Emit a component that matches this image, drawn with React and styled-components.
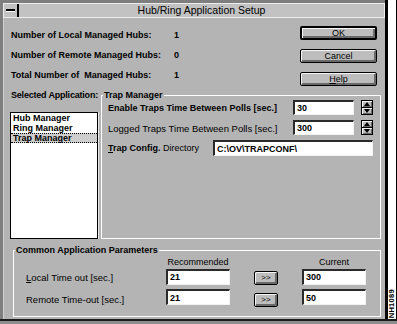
import React from 'react';
import styled, { createGlobalStyle } from 'styled-components';

const Global = createGlobalStyle`
  html, body { margin: 0; padding: 0; background: #8c8c8c; }
  body { font-family: "Liberation Sans", Arial, sans-serif; color: #000; }
  * { box-sizing: border-box; }
`;

const FONT = `"Liberation Sans", Arial, sans-serif`;

const Screen = styled.div`
  width: 397px;
  height: 324px;
  display: grid;
  grid-template-columns: 385px 12px;
  grid-template-rows: 319px 5px;
  background: #8c8c8c;
  overflow: hidden;
`;

const Window = styled.div`
  grid-column: 1;
  grid-row: 1;
  background: #7e7e7e;
  padding: 3px 0 0 3px;
  display: flex;
  flex-direction: column;
`;

const TitleBar = styled.div`
  height: 15px;
  display: flex;
  background: #c2c2c2;
  border: 1px solid #ededed;
`;

const SysMenu = styled.div`
  width: 15px;
  border-right: 2px solid #000;
  display: flex;
  align-items: center;
  justify-content: center;
`;

const SysGlyph = styled.span`
  width: 9px;
  height: 3px;
  border-top: 2px solid #000;
  border-bottom: 1px solid #fff;
`;

const Title = styled.div`
  flex: 1;
  text-align: center;
  font: 10.5px/13px ${FONT};
`;

const Body = styled.div`
  flex: 1;
  background: #b4b4b4;
  border-left: 1px solid #d0d0d0;
  display: flex;
  flex-direction: column;
`;

const TopSection = styled.div`
  height: 71px;
  display: flex;
  justify-content: space-between;
  padding: 0 8px 0 7px;
`;

const InfoGrid = styled.div`
  display: grid;
  grid-template-columns: 163px auto;
  grid-auto-rows: 20px;
  align-items: center;
  padding-top: 7px;
  font: bold 9px ${FONT};
  white-space: nowrap;
`;

const ButtonColumn = styled.div`
  display: flex;
  flex-direction: column;
  gap: 9px;
  padding-top: 8px;
`;

const DlgButton = styled.button`
  width: ${(p) => p.$w || 77}px;
  height: 14px;
  padding: 0;
  background: #bdbdbd;
  border: ${(p) => (p.$default ? 2 : 1)}px solid #000;
  border-radius: 2px;
  box-shadow: inset 1px 1px 0 #f4f4f4, inset -2px -2px 0 #6a6a6a;
  font: ${(p) => p.$size || 9}px/1 ${FONT};
  color: #000;
  display: flex;
  align-items: center;
  justify-content: center;
`;

const Acc = styled.span`
  text-decoration: underline;
`;

const MiddleSection = styled.div`
  display: flex;
  gap: 3px;
  margin-left: 6px;
  height: 150px;
`;

const LeftCol = styled.div`
  width: 88px;
  display: flex;
  flex-direction: column;
`;

const SectionLabel = styled.div`
  height: 12px;
  margin-left: 1px;
  white-space: nowrap;
  letter-spacing: -0.2px;
  font: bold 9px/12px ${FONT};
`;

const ListBox = styled.div`
  margin-top: 11px;
  height: 127px;
  background: #fff;
  border: 1px solid #000;
  box-shadow: 1px 0 0 #e8e8e8;
  display: flex;
  flex-direction: column;
`;

const ListItem = styled.div`
  height: 10px;
  padding-left: 2px;
  font: bold 9px ${FONT};
  line-height: ${(p) => (p.$selected ? 8 : 10)}px;
  white-space: nowrap;
  background: ${(p) => (p.$selected ? '#cdcdcd' : 'transparent')};
  border-top: ${(p) => (p.$selected ? '1px dotted #000' : 'none')};
  border-bottom: ${(p) => (p.$selected ? '1px dotted #000' : 'none')};
`;

const GroupBox = styled.fieldset`
  margin: ${(p) => p.$mt || 0}px 0 0 ${(p) => p.$ml || 0}px;
  padding: 0;
  min-width: 0;
  width: ${(p) => p.$w}px;
  height: ${(p) => p.$h}px;
  border: 1px solid #fff;
`;

const GroupLegend = styled.legend`
  padding: 0 1px;
  margin-left: 1px;
  font: bold 9px/11px ${FONT};
  white-space: nowrap;
`;

const TrapGrid = styled.div`
  display: grid;
  grid-template-columns: 105px 80px 61px 7px 12px;
  grid-template-rows: 16px 16px 16px;
  row-gap: 4px;
  align-items: center;
  padding-left: 6px;
  margin-top: -1px;
`;

const FieldLabel = styled.span`
  grid-column: ${(p) => p.$col || 'auto'};
  font: ${(p) => (p.$bold ? 'bold 9px' : '9.5px')} ${FONT};
  white-space: nowrap;
`;

const Plain = styled.span`
  font-weight: normal;
`;

const Field = styled.input`
  grid-column: ${(p) => p.$col || 'auto'};
  width: 100%;
  height: ${(p) => p.$h || 16}px;
  align-self: ${(p) => p.$align || 'center'};
  padding: 0 0 0 2px;
  margin: 0;
  background: #fff;
  border-top: 2px solid #2a2a2a;
  border-left: 2px solid #2a2a2a;
  border-right: 1px solid #f2f2f2;
  border-bottom: 1px solid #f2f2f2;
  border-radius: 0;
  outline: none;
  font: bold 9px ${FONT};
  color: #000;
`;

const Spin = styled.div`
  grid-column: 5;
  height: 15px;
  align-self: start;
  display: flex;
  flex-direction: column;
  border: 1px solid #000;
  background: #bdbdbd;
`;

const SpinHalf = styled.div`
  flex: 1;
  display: flex;
  align-items: center;
  justify-content: center;
  box-shadow: inset 1px 1px 0 #f4f4f4, inset -1px -1px 0 #6a6a6a;
  & + & {
    border-top: 1px solid #000;
  }
`;

const ParamGrid = styled.div`
  display: grid;
  grid-template-columns: 116px 64px 24px 64px;
  grid-template-rows: 10px 19px 22px;
  column-gap: 24px;
  align-items: end;
  padding: 1px 0 0 12px;
`;

const ColHead = styled.div`
  grid-column: ${(p) => p.$col};
  text-align: center;
  font: 9px/10px ${FONT};
  white-space: nowrap;
`;

const ParamLabel = styled.div`
  grid-column: 1;
  height: 16px;
  font: 9.5px/16px ${FONT};
  white-space: nowrap;
`;

const ArrowBtnCell = styled.div`
  grid-column: 3;
  height: 16px;
  display: flex;
  align-items: start;
  padding-top: 1px;
`;

const Strip = styled.div`
  grid-column: 2;
  grid-row: 1;
  background: #fff;
  border-left: 3px solid #000;
  border-right: 1px solid #000;
  display: flex;
  align-items: flex-end;
  justify-content: center;
  padding-bottom: 1px;
`;

const FigId = styled.span`
  writing-mode: vertical-rl;
  transform: rotate(180deg);
  font: bold 7.5px/8px ${FONT};
  letter-spacing: 0.3px;
`;

const BottomBand = styled.div`
  grid-column: 1 / 3;
  grid-row: 2;
  border-top: 2px solid #1c1c1c;
  background: #8e8e8e;
`;

const Tri = ({ down }) => (
  <svg width="6" height="4" viewBox="0 0 6 4">
    <path d={down ? 'M0 0H6L3 4Z' : 'M0 4H6L3 0Z'} fill="#000" />
  </svg>
);

const SpinButtons = () => (
  <Spin>
    <SpinHalf>
      <Tri />
    </SpinHalf>
    <SpinHalf>
      <Tri down />
    </SpinHalf>
  </Spin>
);

export default function App() {
  return (
    <>
      <Global />
      <Screen>
        <Window>
          <TitleBar>
            <SysMenu>
              <SysGlyph />
            </SysMenu>
            <Title>Hub/Ring Application Setup</Title>
          </TitleBar>
          <Body>
            <TopSection>
              <InfoGrid>
                <span>Number of Local Managed Hubs:</span>
                <span>1</span>
                <span>Number of Remote Managed Hubs:</span>
                <span>0</span>
                <span>Total Number of&nbsp; Managed Hubs:</span>
                <span>1</span>
              </InfoGrid>
              <ButtonColumn>
                <DlgButton $default>OK</DlgButton>
                <DlgButton>Cancel</DlgButton>
                <DlgButton>
                  <span>
                    <Acc>H</Acc>elp
                  </span>
                </DlgButton>
              </ButtonColumn>
            </TopSection>

            <MiddleSection>
              <LeftCol>
                <SectionLabel>Selected Application:</SectionLabel>
                <ListBox>
                  <ListItem>Hub Manager</ListItem>
                  <ListItem>Ring Manager</ListItem>
                  <ListItem $selected>Trap Manager</ListItem>
                </ListBox>
              </LeftCol>
              <GroupBox $w={280} $h={149} $mt={1}>
                <GroupLegend>Trap Manager</GroupLegend>
                <TrapGrid>
                  <FieldLabel $col="1 / 3" $bold>
                    Enable Traps Time Between Polls [sec.]
                  </FieldLabel>
                  <Field $col="3" $h={15} $align="start" readOnly defaultValue="30" />
                  <SpinButtons />
                  <FieldLabel $col="1 / 3">Logged Traps Time Between Polls [sec.]</FieldLabel>
                  <Field $col="3" $h={15} $align="start" readOnly defaultValue="300" />
                  <SpinButtons />
                  <FieldLabel $col="1" $bold>
                    <Acc>T</Acc>rap Config. <Plain>Directory</Plain>
                  </FieldLabel>
                  <Field $col="2 / 6" readOnly defaultValue="C:\OV\TRAPCONF\" />
                </TrapGrid>
              </GroupBox>
            </MiddleSection>

            <GroupBox $w={368} $h={72} $mt={6} $ml={9}>
              <GroupLegend>Common Application Parameters</GroupLegend>
              <ParamGrid>
                <ColHead $col="2">Recommended</ColHead>
                <ColHead $col="4">Current</ColHead>

                <ParamLabel>
                  <Acc>L</Acc>ocal Time out [sec.]
                </ParamLabel>
                <Field $col="2" readOnly defaultValue="21" />
                <ArrowBtnCell>
                  <DlgButton $w={24} $size={8}>&gt;&gt;</DlgButton>
                </ArrowBtnCell>
                <Field $col="4" readOnly defaultValue="300" />

                <ParamLabel>Remote Time-out [sec.]</ParamLabel>
                <Field $col="2" readOnly defaultValue="21" />
                <ArrowBtnCell>
                  <DlgButton $w={24} $size={8}>&gt;&gt;</DlgButton>
                </ArrowBtnCell>
                <Field $col="4" readOnly defaultValue="50" />
              </ParamGrid>
            </GroupBox>
          </Body>
        </Window>
        <Strip>
          <FigId>NH1089</FigId>
        </Strip>
        <BottomBand />
      </Screen>
    </>
  );
}
